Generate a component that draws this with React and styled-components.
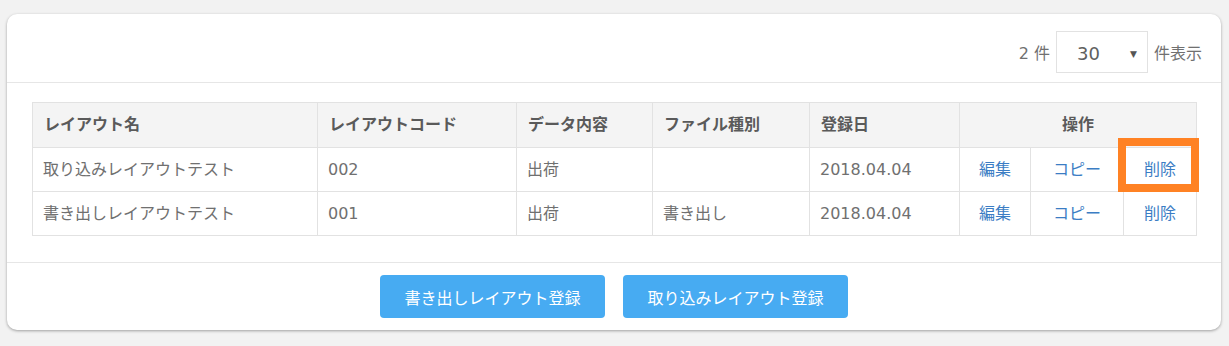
import React from 'react';
import styled, { createGlobalStyle } from 'styled-components';

const GlobalStyle = createGlobalStyle`
  body {
    margin: 0;
    background: #f2f2f2;
    font-family: "DejaVu Sans", "Noto Sans CJK JP", sans-serif;
    color: #555;
  }
`;

const columns = [285, 199, 136, 157, 150, 71, 93, 73];

const rows = [
  { name: '取り込みレイアウトテスト', code: '002', data: '出荷', type: '', date: '2018.04.04', marked: true },
  { name: '書き出しレイアウトテスト', code: '001', data: '出荷', type: '書き出し', date: '2018.04.04' },
];

const App = () => (
  <Page>
    <GlobalStyle />
    <Card>
      <CardHeader>
        <Count>2 件</Count>
        <SelectBox>
          <span>30</span>
          <Caret>▼</Caret>
        </SelectBox>
        <Count>件表示</Count>
      </CardHeader>

      <CardBody>
        <Table>
          <colgroup>
            {columns.map((w, i) => (
              <col key={i} style={{ width: w }} />
            ))}
          </colgroup>
          <thead>
            <tr>
              <Th>レイアウト名</Th>
              <Th>レイアウトコード</Th>
              <Th>データ内容</Th>
              <Th>ファイル種別</Th>
              <Th>登録日</Th>
              <Th colSpan={3} center>操作</Th>
            </tr>
          </thead>
          <tbody>
            {rows.map((r) => (
              <tr key={r.code}>
                <Td>{r.name}</Td>
                <Td>{r.code}</Td>
                <Td>{r.data}</Td>
                <Td>{r.type}</Td>
                <Td>{r.date}</Td>
                <ActionCell><Link>編集</Link></ActionCell>
                <ActionCell><Link>コピー</Link></ActionCell>
                <ActionCell>
                  <Link>削除</Link>
                  {r.marked && <Highlight />}
                </ActionCell>
              </tr>
            ))}
          </tbody>
        </Table>
      </CardBody>

      <CardFooter>
        <PrimaryButton>書き出しレイアウト登録</PrimaryButton>
        <PrimaryButton>取り込みレイアウト登録</PrimaryButton>
      </CardFooter>
    </Card>
  </Page>
);

const Page = styled.div`
  padding: 14px 8px 17px 7px;
`;

const Card = styled.div`
  background: #fff;
  border-radius: 10px;
  box-shadow: 0 1px 3px rgba(0, 0, 0, 0.35);
`;

const CardHeader = styled.div`
  display: flex;
  justify-content: flex-end;
  align-items: center;
  gap: 6px;
  height: 69px;
  box-sizing: border-box;
  padding: 7px 19px 0 0;
  border-bottom: 1px solid #e6e6e6;
`;

const Count = styled.span`
  font-size: 16px;
  color: #707070;
`;

const SelectBox = styled.div`
  width: 92px;
  height: 42px;
  box-sizing: border-box;
  border: 1px solid #e2e2e2;
  display: flex;
  align-items: center;
  justify-content: space-between;
  padding: 4px 10px 0 20px;
  font-size: 18px;
  color: #606060;
`;

const Caret = styled.span`
  font-size: 9px;
  color: #555;
`;

const CardBody = styled.div`
  padding: 19px 25px 26px;
  border-bottom: 1px solid #e6e6e6;
`;

const Table = styled.table`
  width: 100%;
  border-collapse: collapse;
  table-layout: fixed;
  font-size: 16px;
  line-height: 22px;
`;

const Th = styled.th`
  height: 44px;
  padding: 0 11px;
  background: #f4f4f4;
  border: 1px solid #e2e2e2;
  text-align: ${(p) => (p.center ? 'center' : 'left')};
  font-weight: bold;
  color: #5a5a5a;
`;

const Td = styled.td`
  height: 43px;
  padding: 0 10px;
  border: 1px solid #e2e2e2;
  color: #707070;
  white-space: nowrap;
`;

const ActionCell = styled(Td)`
  position: relative;
  text-align: center;
  padding: 0;
`;

const Link = styled.a`
  color: #3b7dc4;
  cursor: pointer;
`;

const Highlight = styled.span`
  position: absolute;
  left: -6px;
  right: -3px;
  top: -10px;
  bottom: -1px;
  border: 8px solid #ff8224;
  pointer-events: none;
`;

const CardFooter = styled.div`
  display: flex;
  justify-content: center;
  gap: 18px;
  padding: 12px 0 12px;
`;

const PrimaryButton = styled.button`
  width: 225px;
  height: 43px;
  border: none;
  border-radius: 4px;
  background: #47abf2;
  color: #fff;
  font-family: inherit;
  font-size: 16px;
  cursor: pointer;
`;

export default App;
